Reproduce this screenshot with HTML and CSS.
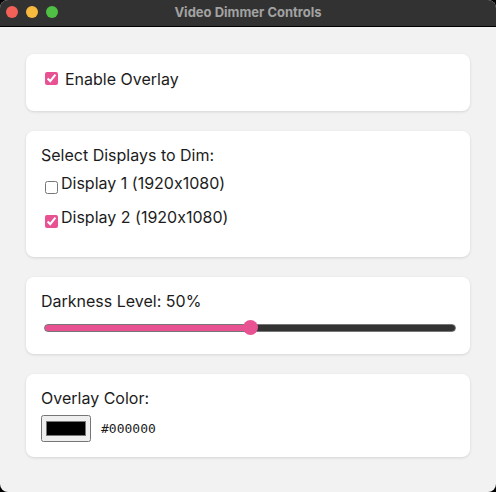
FILE: index.html
```html
<!DOCTYPE html>
<html lang="en">
<head>
<meta charset="utf-8">
<title>Video Dimmer Controls</title>
<link rel="stylesheet" href="styles.css">
</head>
<body>
<div class="window">
  <header class="titlebar">
    <div class="lights">
      <button class="light close" type="button" aria-label="Close"></button>
      <button class="light minimize" type="button" aria-label="Minimize"></button>
      <button class="light zoom" type="button" aria-label="Zoom"></button>
    </div>
    <h1 class="title">Video Dimmer Controls</h1>
  </header>
  <main class="content">
    <section class="card card-toggle">
      <div class="toggle">
        <input class="check" type="checkbox" id="enable" checked>
        <label for="enable">Enable Overlay</label>
      </div>
    </section>
    <section class="card card-displays">
      <h2 class="heading">Select Displays to Dim:</h2>
      <div class="display">
        <input class="check" type="checkbox" id="display1">
        <label for="display1">Display 1 (1920x1080)</label>
      </div>
      <div class="display">
        <input class="check" type="checkbox" id="display2" checked>
        <label for="display2">Display 2 (1920x1080)</label>
      </div>
    </section>
    <section class="card card-level">
      <label class="heading" for="level">Darkness Level: 50%</label>
      <input class="slider" type="range" id="level" min="0" max="100" value="50">
    </section>
    <section class="card">
      <label class="heading" for="color">Overlay Color:</label>
      <div class="color-row">
        <input class="color" type="color" id="color" value="#000000">
        <output class="hex" for="color">#000000</output>
      </div>
    </section>
  </main>
</div>
</body>
</html>
```
FILE: styles.css
```css
* {
  box-sizing: border-box;
}

body {
  margin: 0;
  background: #000;
  color: #1c1c1c;
  font: 400 16px/18px Inter, "Liberation Sans", sans-serif;
  font-variant-ligatures: no-contextual;
}

.window {
  min-height: 100vh;
  border-radius: 8px;
  overflow: hidden;
  background: #f2f2f2;
}

.titlebar {
  display: grid;
  grid-template-columns: 1fr auto 1fr;
  align-items: center;
  height: 27px;
  padding: 0 6px 3px;
  background: #323232;
  border-bottom: 1px solid #000;
}

.lights {
  display: flex;
  gap: 8px;
}

.light {
  width: 12px;
  height: 12px;
  padding: 0;
  border: 0;
  border-radius: 50%;
}

.close { background: #f26157; }
.minimize { background: #f7b93e; }
.zoom { background: #4fc044; }

.title {
  margin: 0;
  color: #a2a2a2;
  font-size: 13px;
  font-weight: 700;
  line-height: 20px;
}

.content {
  display: flex;
  flex-direction: column;
  gap: 20px;
  padding: 27px 26px;
}

.card {
  padding: 15px;
  border-radius: 8px;
  background: #fff;
  box-shadow: 0 1px 3px rgba(0, 0, 0, 0.12);
}

.card-toggle {
  padding-bottom: 22px;
}

.card-displays {
  padding-bottom: 23px;
}

.card-level {
  padding-bottom: 17px;
}

.heading {
  display: block;
  margin: 0;
  padding-bottom: 2px;
  font-size: 16px;
  font-weight: 400;
}

.check {
  width: 13px;
  height: 13px;
  margin: 0;
  accent-color: #e85293;
}

.toggle {
  display: flex;
  align-items: flex-start;
  gap: 7px;
  padding-left: 4px;
  line-height: 20px;
}

.toggle .check {
  margin-top: 3px;
}

.display {
  display: flex;
  align-items: flex-start;
  gap: 3px;
  padding: 8px 0 6px 4px;
}

.display .check {
  margin-top: 7px;
}

.slider {
  display: block;
  width: calc(100% - 2px);
  height: 16px;
  margin: 8px 0 1px 3px;
  appearance: none;
  background: transparent;
}

.slider::-webkit-slider-runnable-track {
  height: 8px;
  border: 1px solid #767676;
  border-radius: 4px;
  background: linear-gradient(to right, #e85293 50%, #333 50%);
}

.slider::-webkit-slider-thumb {
  width: 15px;
  height: 15px;
  margin-top: -5px;
  border-radius: 50%;
  appearance: none;
  background: #e85293;
}

.color-row {
  display: flex;
  align-items: center;
  gap: 10px;
  margin-top: 6px;
}

.color {
  width: 50px;
  height: 27px;
  margin: 0;
  padding: 1px 2px;
}

.hex {
  font: 13px/20px "DejaVu Sans Mono", monospace;
}
```
